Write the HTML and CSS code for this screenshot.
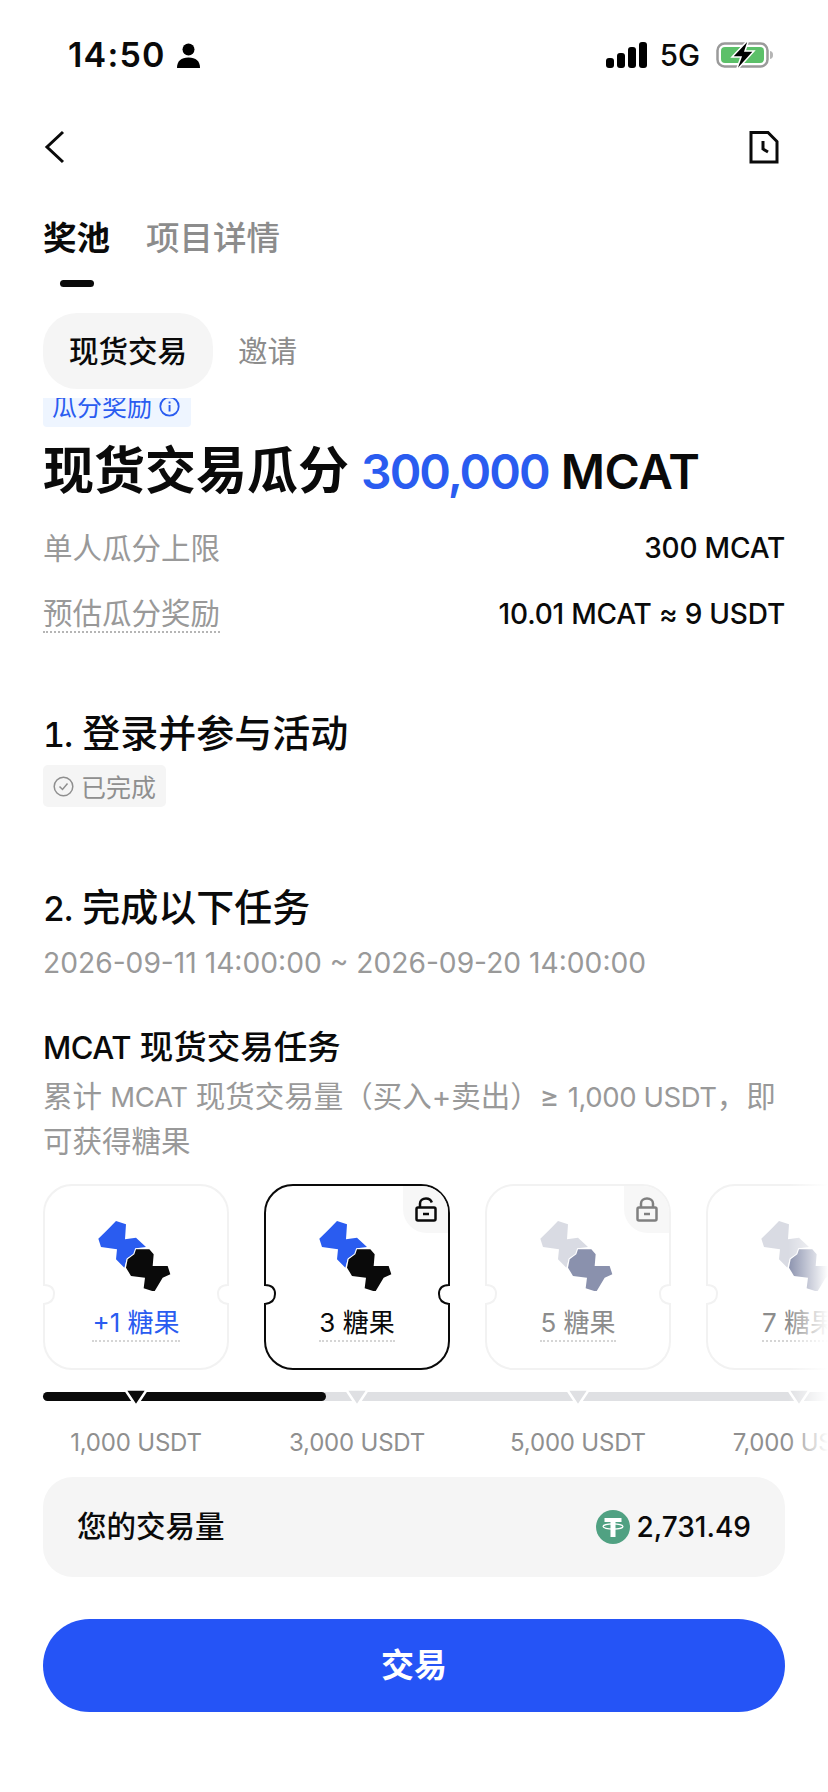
FILE: index.html
```html
<!DOCTYPE html>
<html lang="zh-CN">
<head>
    <meta charset="UTF-8">
    <meta name="viewport" content="width=device-width, initial-scale=1.0">
    <title>现货交易瓜分</title>
    <link rel="stylesheet" href="styles.css">
</head>
<body>
    <svg class="defs" width="0" height="0">
        <symbol id="candy" viewBox="0 0 330 270">
            <path class="candy-a" d="M105 60 135 70 132 115 165 110 195 138 165 142 160 160 138 172 130 200 105 175 108 145 60 138 52 113 78 88Z"/>
            <path class="candy-b" d="M165 145 205 145 218 160 215 195 260 195 268 220 245 230 220 272 188 262 192 230 150 225 135 200 140 175 160 160Z"/>
        </symbol>
        <symbol id="ticket" viewBox="0 0 186 186">
            <path d="M29 1H157A28 28 0 0 1 185 29V101C177 101 175 105 175 110S177 119 185 120V157A28 28 0 0 1 157 185H29A28 28 0 0 1 1 157V120C9 119 11 115 11 110S9 101 1 101V29A28 28 0 0 1 29 1Z"/>
        </symbol>
    </svg>

    <div class="status-bar">
        <div class="status-left">
            <span class="clock">14:50</span>
            <svg class="person" width="25" height="25" viewBox="0 0 25 25"><circle cx="12.500" cy="6.500" r="6"/><path d="M1 25C1 18 5 14.500 12.500 14.500S24 18 24 25Z"/></svg>
        </div>
        <div class="status-right">
            <svg width="42" height="26" viewBox="0 0 42 26"><rect x="0" y="16" width="8" height="10" rx="3"/><rect x="11" y="11" width="8" height="15" rx="3"/><rect x="22" y="5" width="8" height="21" rx="3"/><rect x="33" y="0" width="8" height="26" rx="3"/></svg>
            <span class="network">5G</span>
            <svg width="58" height="32" viewBox="0 0 58 32">
                <rect x="1.500" y="4.500" width="50" height="23" rx="7" fill="none" stroke="#9a9a9a" stroke-width="2.500"/>
                <rect x="5" y="8" width="43" height="16" rx="4" fill="#5cc069"/>
                <path d="M54 12C56.500 12.500 57 14 57 16S56.500 19.500 54 20Z" fill="#b5b5b5"/>
                <path d="M33 0 16 18H25L20 32 38 12H29Z" fill="#000" stroke="#fff" stroke-width="1.500"/>
            </svg>
        </div>
    </div>

    <div class="nav-bar">
        <svg width="22" height="34" viewBox="0 0 22 34"><path class="line" d="M19 2 3 17 19 32"/></svg>
        <svg width="32" height="36" viewBox="0 0 32 36"><path class="line" d="M3 3.500H20L29 12.500V33H3Z"/><path class="line" d="M15 12V20L20 23"/></svg>
    </div>

    <div class="page-tabs">
        <div class="tab-group">
            <div class="tab active">奖池</div>
            <div class="tab">项目详情</div>
        </div>
        <div class="tab-indicator"></div>
    </div>

    <div class="sub-tabs">
        <div class="pill">现货交易</div>
        <div class="sub-tab">邀请</div>
    </div>

    <main class="content">
        <div class="reward-tag">
            <span>瓜分奖励</span>
            <svg class="info-icon" width="21" height="21" viewBox="0 0 21 21"><circle cx="10.500" cy="10.500" r="9.200" fill="none" stroke="#2a5cf0" stroke-width="1.800"/><rect x="9.600" y="9" width="1.900" height="6.500" fill="#2a5cf0"/><rect x="9.600" y="5.500" width="1.900" height="2" fill="#2a5cf0"/></svg>
        </div>

        <h1 class="headline">现货交易瓜分 <em>300,000</em> <span class="headline-coin">MCAT</span></h1>

        <div class="info-row first">
            <span class="info-label">单人瓜分上限</span>
            <span class="info-value">300 MCAT</span>
        </div>
        <div class="info-row">
            <span class="info-label dotted">预估瓜分奖励</span>
            <span class="info-value">10.01 MCAT ≈ 9 USDT</span>
        </div>

        <h2 class="step step-one"><span class="step-no">1.</span> 登录并参与活动</h2>
        <div class="done-tag">
            <svg width="21" height="21" viewBox="0 0 21 21"><circle cx="10.500" cy="10.500" r="9.300" fill="none" stroke="#8f8f8f" stroke-width="1.500"/><path d="M6.500 10.500 9.500 13.500 14.500 7.500" fill="none" stroke="#8f8f8f" stroke-width="1.500"/></svg>
            <span>已完成</span>
        </div>

        <h2 class="step step-two"><span class="step-no">2.</span> 完成以下任务</h2>
        <div class="date-range">2026-09-11 14:00:00 ~ 2026-09-20 14:00:00</div>

        <h3 class="task-title"><span class="latin">MCAT</span> 现货交易任务</h3>
        <p class="task-desc">累计 <span class="latin">MCAT</span> 现货交易量（买入+卖出）≥ <span class="latin">1,000 USDT</span>，即可获得糖果</p>
    </main>

    <section class="rewards">
        <div class="cards">
            <div class="card done">
                <svg class="ticket"><use href="#ticket"/></svg>
                <svg class="candy" width="110" height="90"><use href="#candy"/></svg>
                <span class="card-label">+1 糖果</span>
            </div>
            <div class="card current">
                <svg class="ticket"><use href="#ticket"/></svg>
                <div class="lock-corner">
                    <svg width="22" height="25" viewBox="0 0 22 25"><path class="lock-line" d="M5 10V6.500C5 3.500 7.500 1.500 11 1.500 14 1.500 16 3 16.800 5.500"/><rect class="lock-line" x="1.500" y="10.500" width="19" height="13" rx="1.500"/><path class="lock-line" d="M8 17H14"/></svg>
                </div>
                <svg class="candy" width="110" height="90"><use href="#candy"/></svg>
                <span class="card-label">3 糖果</span>
            </div>
            <div class="card locked">
                <svg class="ticket"><use href="#ticket"/></svg>
                <div class="lock-corner">
                    <svg width="22" height="25" viewBox="0 0 22 25"><path class="lock-line" d="M5 10V6.500C5 3.500 7.500 1.500 11 1.500S17 3.500 17 6.500V10"/><rect class="lock-line" x="1.500" y="10.500" width="19" height="13" rx="1.500"/><path class="lock-line" d="M8 17H14"/></svg>
                </div>
                <svg class="candy" width="110" height="90"><use href="#candy"/></svg>
                <span class="card-label">5 糖果</span>
            </div>
            <div class="card locked">
                <svg class="ticket"><use href="#ticket"/></svg>
                <svg class="candy" width="110" height="90"><use href="#candy"/></svg>
                <span class="card-label">7 糖果</span>
            </div>
        </div>

        <div class="progress">
            <div class="progress-fill"></div>
            <div class="markers">
                <div class="marker reached"><svg width="28" height="20" viewBox="0 0 28 20"><path d="M3 1.500H25L14 18Z"/></svg></div>
                <div class="marker"><svg width="28" height="20" viewBox="0 0 28 20"><path d="M3 1.500H25L14 18Z"/></svg></div>
                <div class="marker"><svg width="28" height="20" viewBox="0 0 28 20"><path d="M3 1.500H25L14 18Z"/></svg></div>
                <div class="marker"><svg width="28" height="20" viewBox="0 0 28 20"><path d="M3 1.500H25L14 18Z"/></svg></div>
            </div>
        </div>

        <div class="amounts">
            <span>1,000 USDT</span>
            <span>3,000 USDT</span>
            <span>5,000 USDT</span>
            <span>7,000 USDT</span>
        </div>

        <div class="edge-fade"></div>
    </section>

    <div class="volume">
        <span class="volume-label">您的交易量</span>
        <div class="volume-value">
            <svg width="34" height="34" viewBox="0 0 34 34">
                <circle cx="17" cy="17" r="17" fill="#50a182"/>
                <path d="M8.500 8H25.500V12H19.500V27H14.500V12H8.500Z" fill="#fff"/>
                <ellipse cx="17" cy="16.500" rx="10" ry="2.600" fill="none" stroke="#fff" stroke-width="1.200"/>
            </svg>
            <span>2,731.49</span>
        </div>
    </div>

    <button class="trade-btn">交易</button>
</body>
</html>
```

FILE: styles.css
```css
/* Base */
body {
    margin: 0;
    width: 828px;
    height: 1792px;
    overflow: hidden;
    background: white;
    color: #0a0a0a;
    font-family: 'Inter', 'Noto Sans CJK SC', sans-serif;
}

.defs {
    position: absolute;
}

.line {
    fill: none;
    stroke: #0a0a0a;
    stroke-width: 3;
}

/* Status bar */
.status-bar {
    height: 110px;
    padding: 0 54px 0 68px;
    display: flex;
    justify-content: space-between;
    align-items: center;
    box-sizing: border-box;
}

.status-left,
.status-right {
    display: flex;
    align-items: center;
}

.clock {
    font-size: 34px;
    font-weight: 600;
    line-height: 40px;
    letter-spacing: 1.200px;
}

.person {
    margin-left: 10px;
}

.network {
    margin: 0 16px 0 12px;
    font-size: 29.500px;
    font-weight: 500;
}

/* Top navigation */
.nav-bar {
    height: 74px;
    padding: 0 48px 0 44px;
    display: flex;
    justify-content: space-between;
    align-items: center;
}

.page-tabs {
    padding: 32px 43px 0;
}

.tab-group {
    display: flex;
    gap: 36px;
}

.tab {
    font-size: 33.500px;
    line-height: 44px;
    font-weight: 500;
    color: #8c8c8c;
}

.tab.active {
    color: #0a0a0a;
    font-weight: 700;
}

.tab-indicator {
    width: 34px;
    height: 7px;
    margin: 20px 0 0 17px;
    border-radius: 4px;
    background: #0a0a0a;
}

.sub-tabs {
    position: relative;
    z-index: 1;
    margin-top: 26px;
    padding: 0 43px 9px;
    display: flex;
    align-items: center;
    gap: 25px;
    background: white;
}

.pill {
    width: 170px;
    height: 76px;
    padding-bottom: 4px;
    box-sizing: border-box;
    display: flex;
    align-items: center;
    justify-content: center;
    border-radius: 34px;
    background: #f5f5f5;
    font-size: 29.500px;
    font-weight: 500;
}

.sub-tab {
    padding-bottom: 4px;
    font-size: 29.500px;
    color: #8c8c8c;
}

/* Main content */
.content {
    margin-top: -13px;
    padding: 0 43px;
}

.reward-tag {
    width: 148px;
    height: 42px;
    padding: 0 0 3px 9px;
    box-sizing: border-box;
    display: flex;
    align-items: center;
    gap: 7px;
    border-radius: 4px;
    background: #eef5ff;
    color: #2a5cf0;
    font-size: 25px;
}

.info-icon {
    margin-top: 3px;
}

.headline {
    margin: 14px 0 0;
    font-size: 51px;
    line-height: 60px;
    font-weight: 700;
}

.headline em,
.headline-coin {
    font-size: 48px;
    line-height: 1;
    font-style: normal;
    font-weight: 600;
}

.headline em {
    color: #2a5cf0;
    letter-spacing: -2px;
}

.headline-coin {
    letter-spacing: -0.500px;
}

.info-row {
    margin-top: 22px;
    height: 44px;
    display: flex;
    justify-content: space-between;
    align-items: center;
}

.info-row.first {
    margin-top: 25px;
}

.info-label {
    padding-bottom: 4px;
    font-size: 29.500px;
    color: #999;
}

.info-label.dotted {
    padding-bottom: 0;
    line-height: 35px;
    border-bottom: 2px dotted #b5b5b5;
}

.info-value {
    font-size: 28px;
    font-weight: 500;
    letter-spacing: -0.200px;
}

.step {
    margin: 0;
    font-size: 38px;
    line-height: 50px;
    font-weight: 500;
}

.step-no {
    font-size: 34px;
    line-height: 1;
    font-variant-numeric: tabular-nums;
    letter-spacing: -1px;
}

.step-one {
    margin-top: 72px;
}

.step-two {
    margin-top: 75px;
}

.done-tag {
    width: 123px;
    height: 42px;
    margin-top: 7px;
    padding-left: 10px;
    box-sizing: border-box;
    display: flex;
    align-items: center;
    gap: 7px;
    border-radius: 5px;
    background: #f5f5f5;
    color: #8f8f8f;
    font-size: 25px;
}

.date-range {
    margin-top: 11px;
    font-size: 28.200px;
    line-height: 40px;
    color: #999;
}

.task-title {
    margin: 42px 0 0;
    font-size: 33.500px;
    line-height: 44px;
    font-weight: 500;
}

.task-title .latin {
    font-size: 31px;
    line-height: 1;
    letter-spacing: -0.500px;
}

.task-desc {
    margin: 5px 0 0;
    font-size: 29.500px;
    line-height: 45px;
    color: #999;
}

.task-desc .latin {
    font-size: 27.500px;
    line-height: 1;
    letter-spacing: -0.400px;
}

/* Reward cards and progress */
.rewards {
    position: relative;
    margin-top: 20px;
    padding-left: 43px;
    overflow: hidden;
}

.cards,
.markers,
.amounts {
    display: flex;
    gap: 35px;
    width: 849px;
}

.card {
    --edge: #f2f2f2;
    --candy-a: #2a5cf0;
    --candy-b: #0a0a0a;
    position: relative;
    flex: none;
    width: 186px;
    height: 186px;
    display: flex;
    flex-direction: column;
    align-items: center;
    font-size: 26px;
}

.card.current {
    --edge: #0a0a0a;
}

.card.locked {
    --candy-a: #d9dbe3;
    --candy-b: #8a91ad;
}

.ticket {
    position: absolute;
    inset: 0;
    width: 186px;
    height: 186px;
    fill: white;
    stroke: var(--edge);
    stroke-width: 2;
}

.candy {
    position: relative;
    margin-top: 17px;
}

.candy-a {
    fill: var(--candy-a);
}

.candy-b {
    fill: var(--candy-b);
    stroke: white;
    stroke-width: 7;
    paint-order: stroke;
}

.card-label {
    position: relative;
    margin-top: 14px;
    line-height: 35px;
    border-bottom: 2px dotted #d5d5d5;
}

.card.done .card-label {
    color: #2a5cf0;
}

.card.locked .card-label {
    color: #8c8c8c;
}

.lock-corner {
    position: absolute;
    top: 2px;
    right: 2px;
    width: 45px;
    height: 47px;
    display: flex;
    align-items: center;
    justify-content: center;
    border-radius: 0 26px 0 24px;
    background: #f7f7f7;
}

.lock-line {
    fill: none;
    stroke: #0a0a0a;
    stroke-width: 2.500;
}

.card.locked .lock-line {
    stroke: #808080;
}

.progress {
    position: relative;
    width: 900px;
    height: 9px;
    margin-top: 22px;
    border-radius: 5px;
    background: #dfe0e3;
}

.progress-fill {
    width: 283px;
    height: 100%;
    border-radius: 5px;
    background: #0a0a0a;
}

.markers {
    position: absolute;
    top: -4px;
    left: 0;
}

.marker {
    flex: none;
    width: 186px;
    display: flex;
    justify-content: center;
}

.marker svg {
    fill: #dfe0e3;
    stroke: white;
    stroke-width: 2.500;
}

.marker.reached svg {
    fill: #0a0a0a;
}

.amounts {
    margin-top: 24px;
    height: 36px;
    font-size: 24px;
    line-height: 36px;
    letter-spacing: -0.200px;
    color: #8f8f8f;
}

.amounts span {
    flex: none;
    width: 186px;
    text-align: center;
}

.edge-fade {
    position: absolute;
    top: 0;
    right: 0;
    bottom: 0;
    width: 40px;
    background: linear-gradient(to right, rgba(255, 255, 255, 0), white);
}

/* Trade volume */
.volume {
    height: 100px;
    margin: 16px 43px 0;
    padding: 0 34px;
    display: flex;
    justify-content: space-between;
    align-items: center;
    border-radius: 30px;
    background: #f5f5f5;
    font-weight: 500;
}

.volume-label {
    padding-bottom: 7px;
    font-size: 29.500px;
}

.volume-value {
    display: flex;
    align-items: center;
    gap: 7px;
    font-size: 28px;
}

/* Trade button */
.trade-btn {
    display: block;
    width: 742px;
    height: 93px;
    margin: 42px 43px 0;
    padding: 0 0 6px;
    border: none;
    border-radius: 47px;
    background: #2554f6;
    color: white;
    font-family: inherit;
    font-size: 33px;
    font-weight: 700;
}
```
